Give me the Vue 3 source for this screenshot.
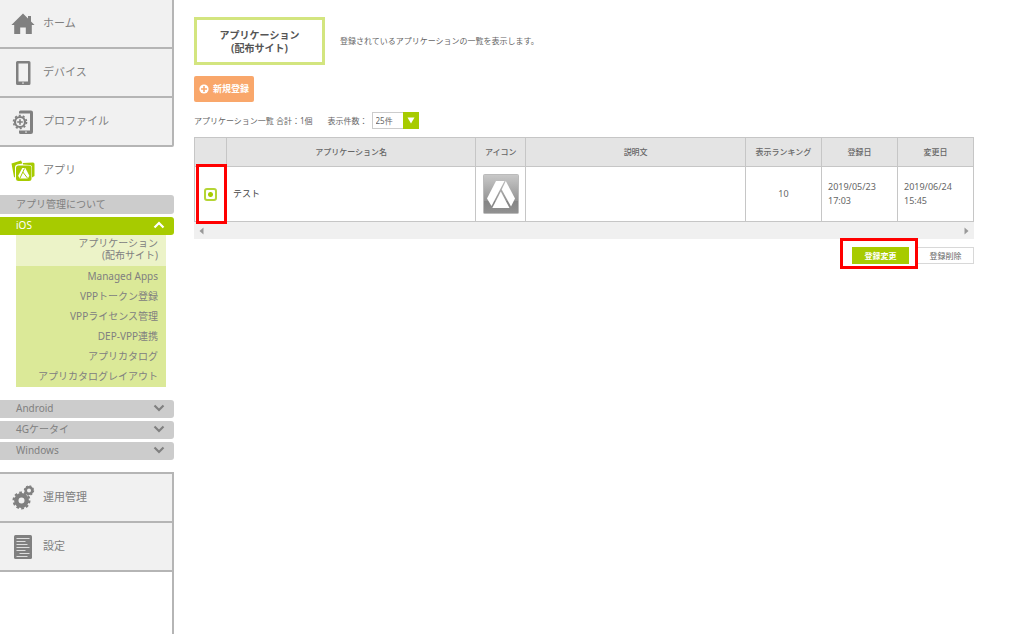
<script setup>
import { ref } from 'vue'

const topItems = [
  { label: 'ホーム', icon: 'home' },
  { label: 'デバイス', icon: 'device' },
  { label: 'プロファイル', icon: 'profile' }
]
const bottomItems = [
  { label: '運用管理', icon: 'gears' },
  { label: '設定', icon: 'settings' }
]
const iosItems = [
  'Managed Apps',
  'VPPトークン登録',
  'VPPライセンス管理',
  'DEP-VPP連携',
  'アプリカタログ',
  'アプリカタログレイアウト'
]
const platforms = ['Android', '4Gケータイ', 'Windows']
const apps = [
  { id: 1, name: 'テスト', text: '', rank: 10, created: ['2019/05/23', '17:03'], updated: ['2019/06/24', '15:45'] }
]
const selected = ref(1)
const perPage = ref('25件')
</script>

<template>
  <div class="page">
    <nav class="sidebar">
      <div class="group">
        <a v-for="item in topItems" :key="item.label" href="#" class="item">
          <span class="icon">
            <svg v-if="item.icon === 'home'" width="24" height="24" viewBox="0 0 24 24">
              <path fill="#808080" d="M12 1.5 0.4 13H3.2V22H9.2V15.6H14.8V22H20.8V13H23.6L20 9.4V4H17V6.4Z" />
            </svg>
            <svg v-else-if="item.icon === 'device'" width="24" height="26" viewBox="0 0 24 26">
              <path fill="#808080" fill-rule="evenodd" d="M6.500 1H18Q19.500 1 19.500 2.500V23.500Q19.500 25 18 25H6.500Q5 25 5 23.500V2.500Q5 1 6.500 1ZM7.500 3.500V21.500H17V3.500Z" />
              <rect x="11" y="22.500" width="2" height="1.200" fill="#d5d5d5" />
            </svg>
            <svg v-else width="24" height="26" viewBox="0 0 24 26">
              <path fill="#808080" d="M9.500 1.500H20Q22 1.500 22 3.500V23Q22 25 20 25H9.500Q8 25 8 23.500V21.500H19V4.500H8V3Q8 1.500 9.500 1.500Z" />
              <circle cx="9" cy="13" r="8" fill="#f1f1f1" />
              <circle cx="9" cy="13" r="5" fill="none" stroke="#808080" stroke-width="2.200" />
              <circle cx="9" cy="13" r="6.500" fill="none" stroke="#808080" stroke-width="1.600" stroke-dasharray="2.100 1.984" />
              <path d="M9 10.200V15.800M6.200 13H11.800" stroke="#808080" stroke-width="1.600" />
              <rect x="14" y="22.500" width="2" height="1.200" fill="#d5d5d5" />
            </svg>
          </span>
          <span class="label">{{ item.label }}</span>
        </a>
      </div>

      <div class="current">
        <a href="#" class="item active">
          <span class="icon">
            <svg width="24" height="22" viewBox="0 0 24 22">
              <path fill="#a7cb00" d="M0.500 3.500 10 0.500 11.500 3.500 6 4.500Q4 5 4 7V17.500L3 17Z" />
              <path fill="#a7cb00" d="M12 3 22 2.500Q23.500 2.500 23.500 4V16L21 17.500V7.500Q21 5 18.500 5L12 4.500Z" />
              <rect x="5" y="5.500" width="15.500" height="15.500" rx="2.500" fill="#a7cb00" />
              <path fill="#fff" d="M11.300 8H14.300L18.400 15.700 16.900 18.500H8.600L7.200 15.700Z" />
              <path fill="none" stroke="#a7cb00" d="M13.500 8.500 8.800 18.500M11.800 12 16.800 18.500" />
            </svg>
          </span>
          <span class="label">アプリ</span>
        </a>
        <a href="#" class="bar about">アプリ管理について</a>
        <button type="button" class="bar open" aria-expanded="true">
          <span>iOS</span>
          <svg width="12" height="8" viewBox="0 0 12 8"><path d="M1.500 6.500 6 2 10.500 6.500" fill="none" stroke="#fff" stroke-width="2.200" /></svg>
        </button>
        <ul class="sub">
          <li class="here"><a href="#">アプリケーション<br>(配布サイト)</a></li>
          <li v-for="s in iosItems" :key="s"><a href="#">{{ s }}</a></li>
        </ul>
        <button v-for="p in platforms" :key="p" type="button" class="bar" aria-expanded="false">
          <span>{{ p }}</span>
          <svg width="12" height="8" viewBox="0 0 12 8"><path d="M1.500 1.500 6 6 10.500 1.500" fill="none" stroke="#808080" stroke-width="2.200" /></svg>
        </button>
      </div>

      <div class="group lower">
        <a v-for="item in bottomItems" :key="item.label" href="#" class="item">
          <span class="icon">
            <svg v-if="item.icon === 'gears'" width="24" height="26" viewBox="0 0 24 26">
              <circle cx="10.500" cy="15.500" r="5.200" fill="none" stroke="#808080" stroke-width="4.400" />
              <circle cx="10.500" cy="15.500" r="7.900" fill="none" stroke="#808080" stroke-width="2.200" stroke-dasharray="2.700 2.264" />
              <circle cx="18" cy="5.500" r="3.300" fill="none" stroke="#808080" stroke-width="2.600" />
              <circle cx="18" cy="5.500" r="4.600" fill="none" stroke="#808080" stroke-width="1.200" stroke-dasharray="1.900 1.713" />
            </svg>
            <svg v-else width="24" height="26" viewBox="0 0 24 26">
              <rect x="3" y="1" width="18" height="24" rx="1.500" fill="#808080" />
              <path d="M5.500 4.500H18.500M5.500 7.500H14.500M5.500 10.500H16.500M5.500 13.500H18.500M5.500 16.500H14.500M8.500 19.500H18.500M5.500 22.500H16.500" stroke="#dedede" stroke-width="1" />
            </svg>
          </span>
          <span class="label">{{ item.label }}</span>
        </a>
      </div>
      <div class="rest"></div>
    </nav>

    <main class="main">
      <header class="intro">
        <h1>アプリケーション<br>(配布サイト)</h1>
        <p>登録されているアプリケーションの一覧を表示します。</p>
      </header>

      <button type="button" class="new">
        <svg width="10" height="10" viewBox="0 0 10 10"><circle cx="5" cy="5" r="4.600" fill="#fff" /><path d="M5 2V8M2 5H8" stroke="#f9a76b" stroke-width="1.600" /></svg>
        <span>新規登録</span>
      </button>

      <div class="summary">
        <span>アプリケーション一覧 合計：1個</span>
        <label for="per-page">表示件数：</label>
        <span class="select">
          <select id="per-page" v-model="perPage">
            <option>25件</option>
            <option>50件</option>
          </select>
          <span class="arrow"><svg width="8" height="7" viewBox="0 0 8 7"><path d="M0.500 0.500H7.500L4 6.500Z" fill="#fff" /></svg></span>
        </span>
      </div>

      <table>
        <colgroup>
          <col class="c-pick"><col class="c-name"><col class="c-icon"><col><col class="c-num"><col class="c-num"><col class="c-num">
        </colgroup>
        <thead>
          <tr><th></th><th>アプリケーション名</th><th>アイコン</th><th>説明文</th><th>表示ランキング</th><th>登録日</th><th>変更日</th></tr>
        </thead>
        <tbody>
          <tr v-for="app in apps" :key="app.id">
            <td class="pick">
              <input v-model="selected" type="radio" name="app" :value="app.id" :aria-label="app.name">
              <span class="mark"></span>
            </td>
            <td class="name">{{ app.name }}</td>
            <td class="center">
              <svg class="app-icon" width="36" height="40" viewBox="0 0 36 40">
                <defs>
                  <linearGradient id="tile" x1="0" y1="0" x2="0" y2="1">
                    <stop offset="0" stop-color="#c9c9c9" /><stop offset="0.680" stop-color="#939393" /><stop offset="0.690" stop-color="#858585" /><stop offset="1" stop-color="#929292" />
                  </linearGradient>
                </defs>
                <rect x="0.500" y="0.500" width="35" height="39" rx="1" fill="url(#tile)" stroke="#bbb" />
                <path fill="#fff" d="M13 7H21.500L8.500 32 4 24.500Z" />
                <path fill="#fff" d="M22.800 7 32 24.500 28 32.500 18.700 15.500Z" />
                <path fill="#fff" d="M17.800 17.500 26.500 34H9.300Z" />
              </svg>
            </td>
            <td>{{ app.text }}</td>
            <td class="center">{{ app.rank }}</td>
            <td>{{ app.created[0] }}<br>{{ app.created[1] }}</td>
            <td>{{ app.updated[0] }}<br>{{ app.updated[1] }}</td>
          </tr>
        </tbody>
      </table>
      <div class="scroll">
        <svg width="5" height="8" viewBox="0 0 5 8"><path d="M4.500 0.500V7.500L0.500 4Z" fill="#999" /></svg>
        <svg width="5" height="8" viewBox="0 0 5 8"><path d="M0.500 0.500V7.500L4.500 4Z" fill="#999" /></svg>
      </div>

      <div class="actions">
        <span class="marked"><button type="button" class="edit">登録変更</button><span class="mark"></span></span>
        <button type="button" class="delete">登録削除</button>
      </div>
    </main>
  </div>
</template>

<style>
body {
  margin: 0;
  background: #fff;
}
</style>

<style scoped>
.page {
  display: flex;
  min-height: 100vh;
  font-family: "Noto Sans", "Noto Sans CJK JP", sans-serif;
  font-size: 8px;
  line-height: 14px;
  color: #666;
}
.page * {
  box-sizing: border-box;
}
button,
select {
  font: inherit;
  color: inherit;
  margin: 0;
  padding: 0;
  border: 0;
  cursor: pointer;
}
a {
  color: inherit;
  text-decoration: none;
}
.sidebar {
  flex: 0 0 174px;
  display: flex;
  flex-direction: column;
  color: #808080;
}
.group {
  border-right: 2px solid #b5b5b5;
  border-bottom-right-radius: 2px;
}
.lower {
  margin-top: 9px;
  border-top: 2px solid #b5b5b5;
  border-radius: 0;
}
.item {
  display: flex;
  align-items: center;
  gap: 8px;
  height: 49px;
  padding-left: 11px;
  background: #f1f1f1;
  border-bottom: 2px solid #b5b5b5;
  font-size: 11px;
}
.item.active {
  height: 48px;
  background: none;
  border: 0;
}
.icon {
  display: flex;
  justify-content: center;
  width: 24px;
}
.icon svg {
  display: block;
}
.label {
  padding-bottom: 2px;
}
.rest {
  flex: 1;
  border-right: 2px solid #b5b5b5;
}
.bar {
  display: flex;
  align-items: center;
  justify-content: space-between;
  width: 100%;
  height: 18px;
  margin-bottom: 3px;
  padding: 0 9px 2px 16px;
  border-radius: 0 3px 3px 0;
  background: #ccc;
  font-size: 10px;
  text-align: left;
}
.about {
  height: 19px;
}
.bar.open {
  margin: 0;
  background: #a7cb00;
  color: #fff;
}
.sub {
  margin: 0 8px 13px 16px;
  padding: 0 0 1px;
  list-style: none;
  background: #dbe998;
  font-size: 10px;
  line-height: 20px;
  text-align: right;
}
.sub a {
  display: block;
  padding-right: 8px;
}
.sub .here {
  padding: 2px 0 5px;
  background: #ecf3c8;
  line-height: 12px;
}
.main {
  flex: 1;
  min-width: 0;
  padding: 17px 50px 20px 20px;
}
.intro {
  display: flex;
  align-items: center;
  gap: 15px;
}
.intro h1 {
  width: 131px;
  margin: 0;
  padding: 9px 0 7px;
  border: 3px solid #d3e57f;
  font-size: 10px;
  line-height: 13px;
  text-align: center;
  color: #555;
}
.intro p {
  margin: 0;
}
.new {
  display: flex;
  align-items: center;
  gap: 4px;
  height: 26px;
  margin-top: 11px;
  padding: 0 5px;
  border-radius: 2px;
  background: #f9a76b;
  color: #fff;
  font-size: 9px;
  font-weight: bold;
}
.summary {
  display: flex;
  align-items: center;
  margin: 10px 0 8px;
}
.summary label {
  margin: 0 4px 0 15px;
}
.select {
  position: relative;
  display: flex;
}
select {
  width: 47px;
  height: 17px;
  padding: 0 3px;
  border: 1px solid #ccc;
  border-radius: 0;
  background: #fff;
  appearance: none;
}
.arrow {
  position: absolute;
  top: 0;
  right: 0;
  display: flex;
  align-items: center;
  justify-content: center;
  width: 16px;
  height: 17px;
  background: #a7cb00;
  pointer-events: none;
}
table {
  width: 100%;
  table-layout: fixed;
  border-collapse: collapse;
}
.c-pick {
  width: 32px;
}
.c-name {
  width: 32%;
}
.c-icon {
  width: 50px;
}
.c-num {
  width: 76px;
}
th,
td {
  border: 1px solid #c6c6c6;
  padding: 0 6px;
}
th {
  height: 29px;
  padding: 0;
  background: #e4e4e4;
  font-weight: 500;
}
td {
  height: 55px;
  font-size: 9px;
  text-align: left;
}
td.center,
td.pick {
  padding: 0;
  text-align: center;
}
.name {
  color: #444;
}
.app-icon {
  display: block;
  margin: 0 auto;
}
.pick {
  position: relative;
}
.pick input {
  display: block;
  width: 13px;
  height: 13px;
  margin: 0 auto;
  border: 2px solid #b5d535;
  border-radius: 3px;
  background: #fff;
  appearance: none;
}
.pick input:checked {
  background: radial-gradient(circle, #a7cb00 2px, #fff 3px);
}
.mark {
  position: absolute;
  border: 3px solid #f00;
  pointer-events: none;
}
.pick .mark {
  inset: -3px -1px -3px 1px;
}
.scroll {
  display: flex;
  align-items: center;
  justify-content: space-between;
  height: 17px;
  padding: 0 5px;
  background: #f0f0f0;
}
.actions {
  display: flex;
  justify-content: flex-end;
  gap: 8px;
  margin-top: 8px;
}
.marked {
  position: relative;
}
.marked .mark {
  inset: -9px -9px -5px -12px;
}
.actions button {
  display: block;
  width: 57px;
  height: 17px;
}
.edit {
  background: #a7cb00;
  color: #fff;
  font-weight: bold;
}
.actions .delete {
  border: 1px solid #d8d8d8;
  background: #fff;
}
</style>
